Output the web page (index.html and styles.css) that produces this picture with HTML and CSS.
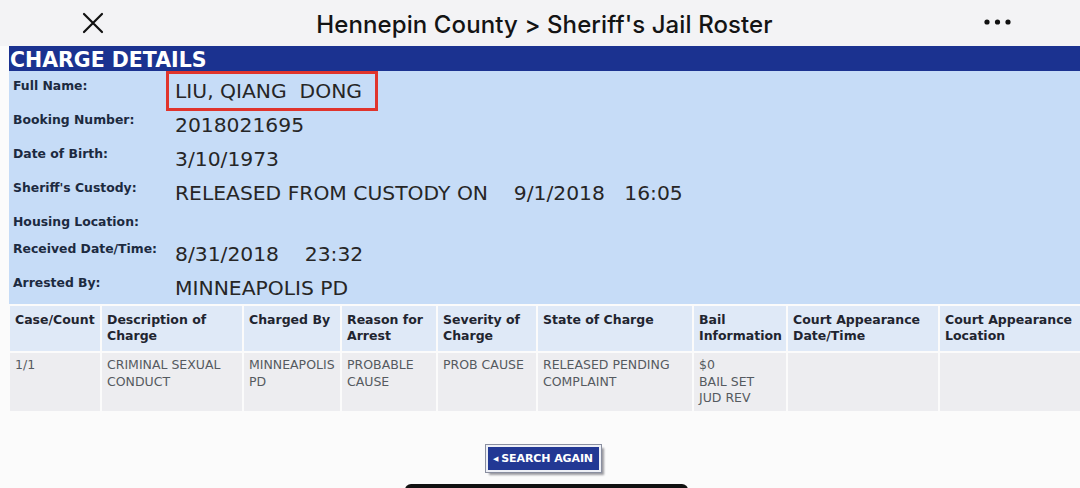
FILE: index.html
```html
<!DOCTYPE html>
<html lang="en">
<head>
<meta charset="utf-8">
<title>Hennepin County &gt; Sheriff's Jail Roster</title>
<link rel="stylesheet" href="styles.css">
</head>
<body>
<header class="topbar">
  <button class="icon-btn close" aria-label="Close">
    <svg width="22" height="22" viewBox="0 0 22 22"><path d="M2 2 L20 20 M20 2 L2 20" stroke="#111" stroke-width="2.2" stroke-linecap="round" fill="none"/></svg>
  </button>
  <h1 class="title">Hennepin County &gt; Sheriff's Jail Roster</h1>
  <button class="icon-btn more" aria-label="More">
    <svg width="30" height="8" viewBox="0 0 30 8"><circle cx="4" cy="4" r="2.6" fill="#111"/><circle cx="14.5" cy="4" r="2.6" fill="#111"/><circle cx="25" cy="4" r="2.6" fill="#111"/></svg>
  </button>
</header>

<main class="content">
  <div class="section-title">CHARGE DETAILS</div>
  <div class="details">
    <div class="label">Full Name:</div>
    <div class="value"><span class="highlight">LIU, QIANG  DONG</span></div>

    <div class="label">Booking Number:</div>
    <div class="value">2018021695</div>

    <div class="label">Date of Birth:</div>
    <div class="value">3/10/1973</div>

    <div class="label">Sheriff's Custody:</div>
    <div class="value">RELEASED FROM CUSTODY ON    9/1/2018   16:05</div>

    <div class="label">Housing Location:</div>
    <div class="value"></div>

    <div class="label">Received Date/Time:</div>
    <div class="value">8/31/2018    23:32</div>

    <div class="label">Arrested By:</div>
    <div class="value">MINNEAPOLIS PD</div>
  </div>

  <table class="charges">
    <colgroup>
      <col class="c1"><col class="c2"><col class="c3"><col class="c4"><col class="c5"><col class="c6"><col class="c7"><col class="c8"><col class="c9">
    </colgroup>
    <thead>
      <tr>
        <th>Case/Count</th>
        <th>Description of Charge</th>
        <th>Charged By</th>
        <th>Reason for Arrest</th>
        <th>Severity of Charge</th>
        <th>State of Charge</th>
        <th>Bail Information</th>
        <th>Court Appearance Date/Time</th>
        <th>Court Appearance Location</th>
      </tr>
    </thead>
    <tbody>
      <tr>
        <td>1/1</td>
        <td>CRIMINAL SEXUAL CONDUCT</td>
        <td>MINNEAPOLIS PD</td>
        <td>PROBABLE CAUSE</td>
        <td>PROB CAUSE</td>
        <td>RELEASED PENDING COMPLAINT</td>
        <td>$0<br>BAIL SET<br>JUD REV</td>
        <td></td>
        <td></td>
      </tr>
    </tbody>
  </table>

  <div class="actions">
    <button class="search-btn"><span class="arrow">&#9664;</span>SEARCH AGAIN</button>
  </div>
</main>
<div class="home-bar"></div>
</body>
</html>
```

FILE: styles.css
```css
html, body {
  margin: 0;
  padding: 0;
  background: #fbfbfb;
  width: 1080px;
  height: 488px;
  overflow: hidden;
}

body {
  font-family: "DejaVu Sans", Verdana, sans-serif;
  position: relative;
}

.topbar {
  height: 46px;
  background: #f3f3f5;
  display: flex;
  align-items: center;
  box-sizing: border-box;
}

.icon-btn {
  background: none;
  border: 0;
  padding: 0;
  display: flex;
  align-items: center;
  justify-content: center;
}

.close {
  width: 22px;
  height: 22px;
  margin-left: 82px;
  margin-top: 0;
}

.title {
  flex: 1;
  margin: 0;
  text-align: center;
  font-family: Inter, "Noto Sans", sans-serif;
  font-weight: 500;
  font-size: 24px;
  letter-spacing: 0.1px;
  color: #141414;
  padding-left: 2px;
  margin-top: 3px;
}

.more {
  width: 30px;
  height: 8px;
  margin-right: 67px;
  margin-top: -2px;
}

.content {
  padding-left: 9px;
}

.section-title {
  height: 25px;
  background: #1b3290;
  color: #ffffff;
  font-weight: bold;
  font-size: 20.5px;
  line-height: 28px;
  padding-left: 1px;
  overflow: hidden;
}

.details {
  background: #c6dcf7;
  display: grid;
  grid-template-columns: 166px 1fr;
  padding: 1px 0 1px 0;
}

.label {
  font-weight: bold;
  font-size: 12.4px;
  line-height: 14px;
  color: #1c2a40;
  padding: 7px 0 6px 4px;
  white-space: nowrap;
}

.value {
  font-size: 20.3px;
  line-height: 24px;
  color: #262626;
  white-space: pre;
  padding: 7px 0 3px 0;
}

.highlight {
  display: inline-block;
  border: 3px solid #e0342c;
  padding: 5px 13px 5px 6px;
  margin: -8px 0 -8px -9px;
}

.charges {
  border-collapse: separate;
  border-spacing: 2px;
  table-layout: fixed;
  margin-left: -1px;
  font-size: 12.5px;
  width: 1074px;
}

.c1 { width: 90px; }
.c2 { width: 140px; }
.c3 { width: 96px; }
.c4 { width: 94px; }
.c5 { width: 98px; }
.c6 { width: 154px; }
.c7 { width: 92px; }
.c8 { width: 150px; }
.c9 { width: 140px; }

.charges th {
  background: #dfe9f7;
  color: #1f2530;
  font-weight: bold;
  text-align: left;
  vertical-align: top;
  line-height: 16px;
  height: 45px;
  box-sizing: border-box;
  padding: 6px 4px 0 5px;
}

.charges td {
  background: #ededf0;
  color: #555a60;
  vertical-align: top;
  line-height: 16.5px;
  height: 58px;
  box-sizing: border-box;
  padding: 4px 4px 0 5px;
}

.actions {
  display: flex;
  justify-content: center;
  padding-top: 32px;
  padding-right: 2px;
}

.search-btn {
  background: #223894;
  color: #ffffff;
  font-family: "DejaVu Sans", Verdana, sans-serif;
  font-weight: bold;
  font-size: 11px;
  letter-spacing: -0.1px;
  border: 2px solid #eef0f6;
  outline: 1px solid #8a8fa0;
  box-shadow: 3px 3px 2px #9a9aa0;
  height: 27px;
  padding: 0 6px 0 5px;
  display: flex;
  align-items: center;
}

.arrow {
  font-size: 7px;
  margin-right: 3px;
}

.home-bar {
  position: absolute;
  left: 405px;
  top: 484px;
  width: 283px;
  height: 10px;
  background: #111;
  border-radius: 6px 6px 0 0;
}
```
